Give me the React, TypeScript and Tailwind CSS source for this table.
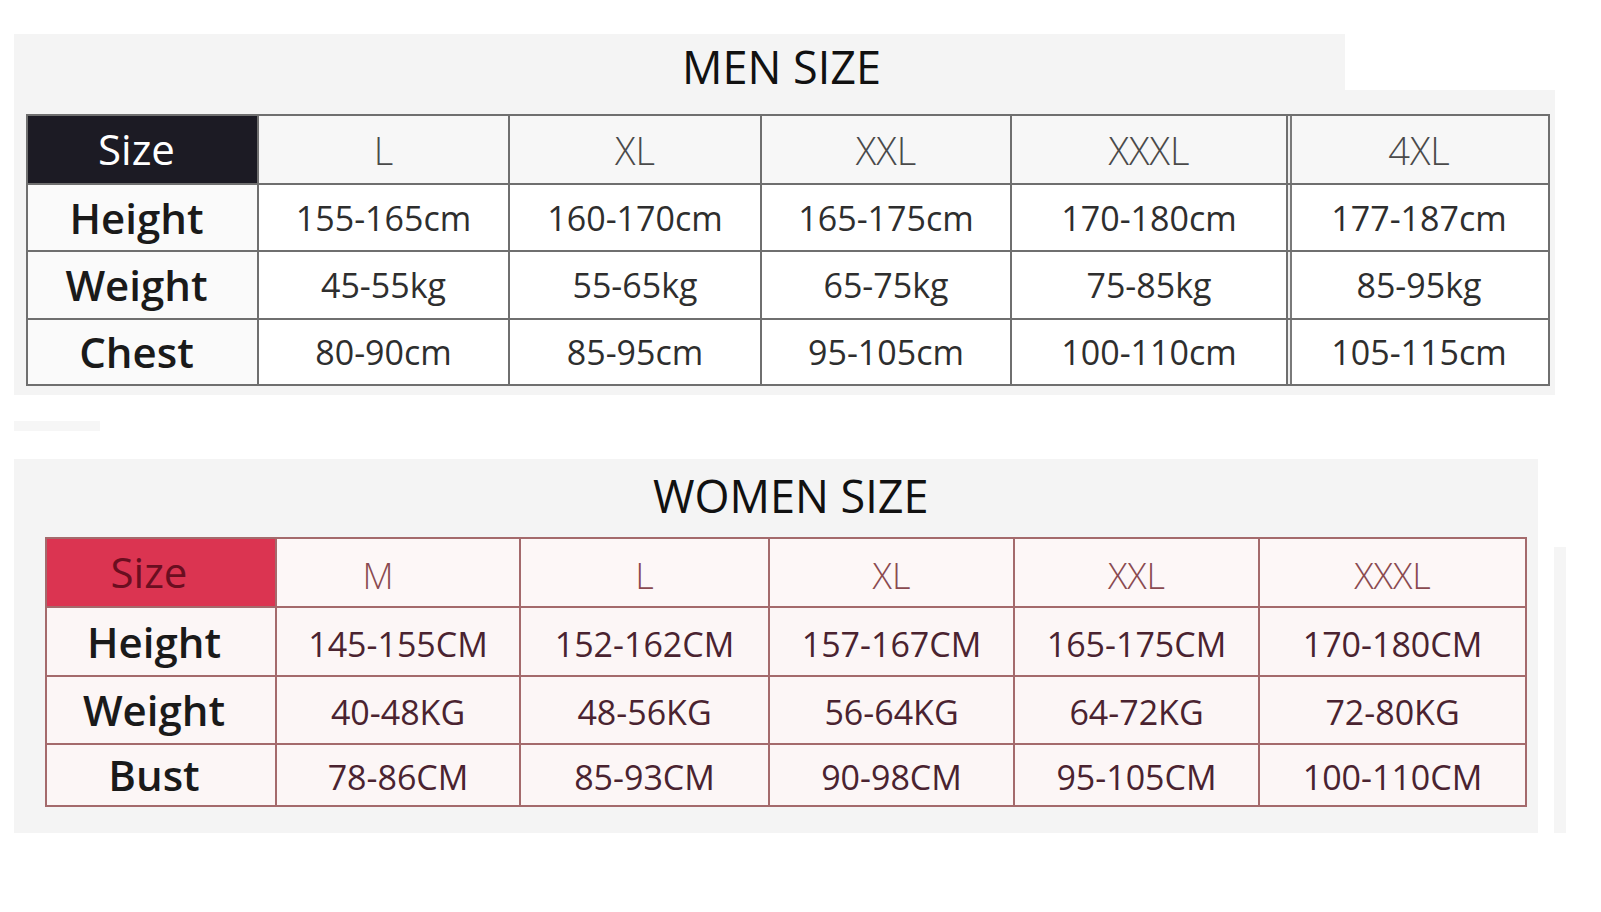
import React from 'react';

type Chart = {
  title: string;
  sizes: string[];
  rows: { label: string; values: string[] }[];
};

const men: Chart = {
  title: 'MEN SIZE',
  sizes: ['L', 'XL', 'XXL', 'XXXL', '4XL'],
  rows: [
    { label: 'Height', values: ['155-165cm', '160-170cm', '165-175cm', '170-180cm', '177-187cm'] },
    { label: 'Weight', values: ['45-55kg', '55-65kg', '65-75kg', '75-85kg', '85-95kg'] },
    { label: 'Chest', values: ['80-90cm', '85-95cm', '95-105cm', '100-110cm', '105-115cm'] },
  ],
};

const women: Chart = {
  title: 'WOMEN SIZE',
  sizes: ['M', 'L', 'XL', 'XXL', 'XXXL'],
  rows: [
    { label: 'Height', values: ['145-155CM', '152-162CM', '157-167CM', '165-175CM', '170-180CM'] },
    { label: 'Weight', values: ['40-48KG', '48-56KG', '56-64KG', '64-72KG', '72-80KG'] },
    { label: 'Bust', values: ['78-86CM', '85-93CM', '90-98CM', '95-105CM', '100-110CM'] },
  ],
};

const MenTable = () => (
  <div className="grid grid-cols-[229px_249px_250px_248px_274px_260px] grid-rows-[67px_65px_66px_64px] gap-[2px] p-[2px] bg-[#6f6f6f] w-[1524px]">
    <div className="bg-[#1c1b24] flex items-center justify-center text-white text-[42px] leading-none pb-[2px] pr-[12px]">Size</div>
    {men.sizes.map((s, i) => (
      <div
        key={s}
        className={`bg-[#f7f7f7] flex items-center justify-center text-[#4a4a4a] text-[38px] font-light leading-none ${i === 4 ? 'border-l-2 border-l-[#f0f0f0] shadow-[inset_2px_0_0_#7a7a7a]' : ''}`}
      >
        {s}
      </div>
    ))}
    {men.rows.map((r) => (
      <React.Fragment key={r.label}>
        <div className="bg-[#fafafa] flex items-center justify-center text-[#1a1a1a] text-[42px] font-semibold leading-none pr-[12px]">{r.label}</div>
        {r.values.map((v, i) => (
          <div
            key={v}
            className={`bg-white flex items-center justify-center text-[#2e2e2e] text-[34px] leading-none ${i === 4 ? 'border-l-2 border-l-[#f0f0f0] shadow-[inset_2px_0_0_#7a7a7a]' : ''}`}
          >
            {v}
          </div>
        ))}
      </React.Fragment>
    ))}
  </div>
);

const WomenTable = () => (
  <div className="grid grid-cols-[228px_242px_247px_243px_243px_265px] grid-rows-[67px_67px_66px_60px] gap-[2px] p-[2px] bg-[#a46a6c] w-[1482px]">
    <div className="bg-[#db3451] flex items-center justify-center text-[#6a0e20] text-[42px] leading-none pb-[2px] pr-[24px]">Size</div>
    {women.sizes.map((s, i) => (
      <div
        key={s}
        className={`bg-[#fdf7f7] flex items-center justify-center text-[#8a4a50] text-[36px] font-light leading-none pt-[6px] ${i === 0 ? 'pr-[40px]' : ''}`}
      >
        {s}
      </div>
    ))}
    {women.rows.map((r) => (
      <React.Fragment key={r.label}>
        <div className="bg-[#fcf6f6] flex items-center justify-center text-[#1a1a1a] text-[42px] font-semibold leading-none pr-[14px]">{r.label}</div>
        {r.values.map((v) => (
          <div key={v} className="bg-[#fcf6f6] flex items-center justify-center text-[#4a2330] text-[34px] leading-none pt-[4px]">
            {v}
          </div>
        ))}
      </React.Fragment>
    ))}
  </div>
);

export default function App() {
  return (
    <div className="w-[1601px] h-[912px] bg-white overflow-hidden font-['Open_Sans','Noto_Sans',sans-serif]">
      {/* men */}
      <section className="ml-[14px] pt-[34px]">
        <div className="w-[1331px] h-[56px] bg-[#f4f4f4] flex items-center pl-[668px] pt-[8px]">
          <h2 className="text-[45px] leading-none text-[#111] whitespace-nowrap">{men.title}</h2>
        </div>
        <div className="w-[1541px] bg-[#f4f4f4] pt-[24px] pb-[9px] pl-[12px]">
          <MenTable />
        </div>
      </section>

      <div className="ml-[14px] mt-[26px] w-[86px] h-[10px] bg-[#f6f6f6]" />

      {/* women */}
      <section className="ml-[14px] mt-[28px] flex">
        <div className="w-[1524px] bg-[#f4f4f4]">
          <div className="h-[68px] flex items-center pl-[639px] pt-[4px]">
            <h2 className="text-[45px] leading-none text-[#111] whitespace-nowrap">{women.title}</h2>
          </div>
          <div className="pt-[10px] pb-[21px] pl-[31px]">
            <WomenTable />
          </div>
        </div>
        <div className="ml-[16px] mt-[88px] w-[12px] h-[286px] bg-[#f5f5f5]" />
      </section>
    </div>
  );
}
